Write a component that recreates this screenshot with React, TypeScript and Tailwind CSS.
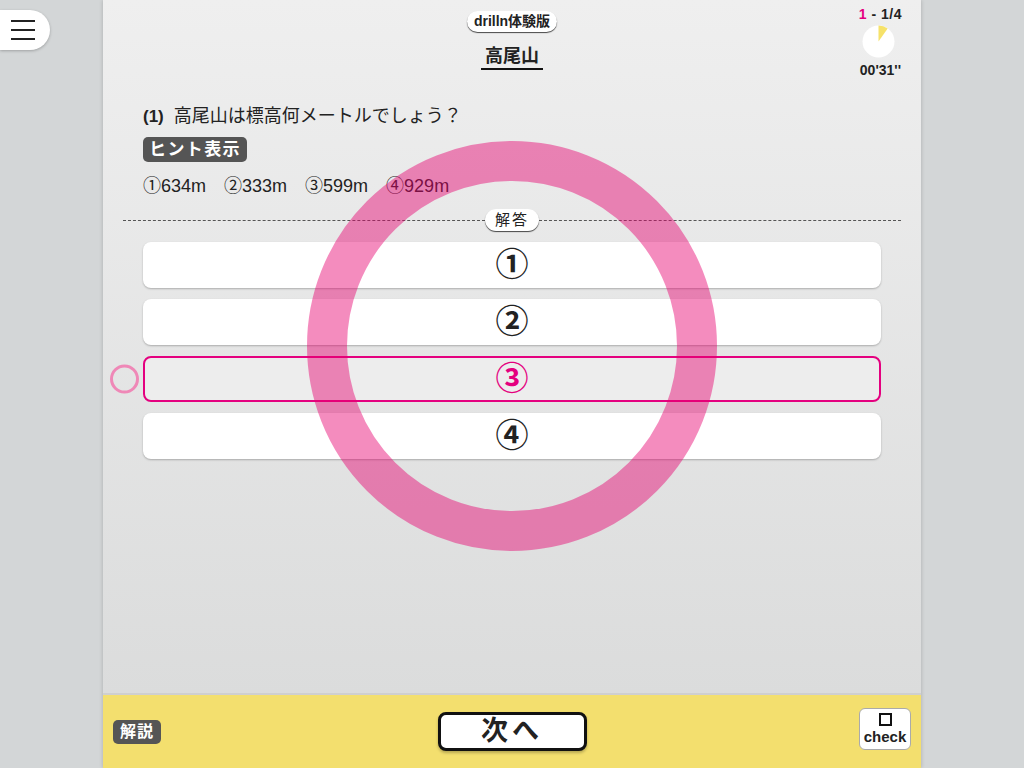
import React from 'react'

const font = "font-['Liberation_Sans','Noto_Sans_CJK_JP',sans-serif]"

const choices = ['①', '②', '③', '④']
const hints = ['①634m', '②333m', '③599m', '④929m']

const TimerPie = () => {
  // 31 seconds elapsed, drawn as a small yellow wedge
  const a = (35 * Math.PI) / 180
  const x = 16.5 + 16 * Math.sin(a)
  const y = 16.5 - 16 * Math.cos(a)
  return (
    <svg width="33" height="33" viewBox="0 0 33 33">
      <circle cx="16.5" cy="16.5" r="16" fill="#ffffff" />
      <path d={`M16.5 16.5 L16.5 0.5 A16 16 0 0 1 ${x} ${y} Z`} fill="#f6e26a" />
    </svg>
  )
}

export default function App() {
  const selected = 2

  return (
    <div className={`relative w-full h-[768px] bg-[#d3d6d7] overflow-hidden text-[#222] ${font}`}>
      {/* menu button */}
      <div className="absolute left-0 top-[10px] z-20 w-[50px] h-[40px] bg-white rounded-r-full shadow-[0_1px_3px_rgba(0,0,0,0.25)] flex flex-col justify-center gap-[7px] pl-[11px]">
        <div className="w-[24px] h-[2px] bg-[#222]" />
        <div className="w-[24px] h-[2px] bg-[#222]" />
        <div className="w-[24px] h-[2px] bg-[#222]" />
      </div>

      <div className="relative mx-auto w-[818px] h-full flex flex-col bg-linear-to-b from-[#efefef] to-[#d9dada] shadow-[0_0_4px_rgba(0,0,0,0.2)]">
        <div className="relative flex-1">
          {/* header */}
          <div className="grid grid-cols-[1fr_auto_1fr] items-start h-[80px]">
            <div />
            <div className="flex flex-col items-center mt-[11px]">
              <div className="h-[21px] px-[7px] rounded-full bg-white text-[14px] font-bold leading-[21px] shadow-[0_1px_1px_rgba(0,0,0,0.7)]">
                drilln体験版
              </div>
              <div className="mt-[13px] px-[4px] pb-[1px] text-[18px] font-bold leading-[22px] border-b-2 border-[#111]">
                高尾山
              </div>
            </div>
            <div className="justify-self-end mr-[19px] mt-[7px] flex flex-col items-center">
              <div className="text-[14px] font-bold leading-[14px] tracking-[0.5px]">
                <span className="text-[#e4007f]">1</span> - 1/4
              </div>
              <div className="mt-[4px] mr-[4px]">
                <TimerPie />
              </div>
              <div className="mt-[4px] text-[14px] font-bold leading-[16px]">00'31''</div>
            </div>
          </div>

          {/* question */}
          <div className="px-10 mt-[24px]">
            <div className="text-[18px] leading-[24px]">
              <span className="font-bold mr-[10px] text-[17px]">(1)</span>高尾山は標高何メートルでしょう？
            </div>
            <div className="mt-[8px] inline-flex items-center h-[25px] px-[6px] rounded-[5px] bg-[#555] text-white text-[17px] font-bold tracking-[1.4px]">
              ヒント表示
            </div>
            <div className="mt-[13px] flex gap-[18px] text-[18px] leading-[22px]">
              {hints.map((h) => (
                <span key={h}>{h}</span>
              ))}
            </div>
          </div>

          {/* answer divider */}
          <div className="mx-5 mt-[12px] flex items-center h-[22px]">
            <div className="flex-1 border-t border-dashed border-[#555]" />
            <div className="h-[22px] px-[10px] rounded-full bg-white text-[15px] leading-[22px] tracking-[2px] shadow-[0_1px_1px_rgba(0,0,0,0.7)]">
              解答
            </div>
            <div className="flex-1 border-t border-dashed border-[#555]" />
          </div>

          {/* choices */}
          <div className="mx-10 mt-[11px] flex flex-col gap-[11px]">
            {choices.map((c, i) => (
              <div
                key={c}
                className={`relative h-[46px] rounded-[8px] flex items-center justify-center text-[33px] font-bold ${
                  i === selected
                    ? 'bg-[#ededed] border-2 border-[#e4007f] text-[#e4007f]'
                    : 'bg-white shadow-[0_1px_2px_rgba(0,0,0,0.25)]'
                }`}
              >
                {c}
                {i === selected && (
                  <div className="absolute left-[-35px] top-1/2 -translate-y-1/2 w-[29px] h-[29px] rounded-full border-[3px] border-[#ef88b7]" />
                )}
              </div>
            ))}
          </div>

          {/* correct mark overlay */}
          <div className="pointer-events-none absolute left-[204px] top-[141px] w-[410px] h-[410px] rounded-full border-[40px] border-[rgba(230,0,110,0.45)]" />
        </div>

        {/* footer */}
        <div className="h-[75px] border-t-2 border-[#cfcfcf] bg-[#f3df6e] grid grid-cols-3 items-center px-[10px]">
          <div className="justify-self-start mt-[1px] h-[24px] px-[7px] rounded-[5px] bg-[#555] text-white text-[16px] font-bold leading-[24px] tracking-[1px]">
            解説
          </div>
          <div className="justify-self-center w-[149px] h-[39px] rounded-[8px] border-[3px] border-[#111] bg-white flex items-center justify-center text-[27px] font-bold tracking-[4px] shadow-[0_2px_3px_rgba(0,0,0,0.25)]">
            次へ
          </div>
          <div className="justify-self-end -mt-[5px] w-[52px] h-[42px] rounded-[6px] border border-[#aaa] bg-white flex flex-col items-center pt-[4px]">
            <div className="w-[13px] h-[13px] border-2 border-[#111]" />
            <div className="text-[15px] font-bold leading-[18px] mt-[2px]">check</div>
          </div>
        </div>
      </div>
    </div>
  )
}
